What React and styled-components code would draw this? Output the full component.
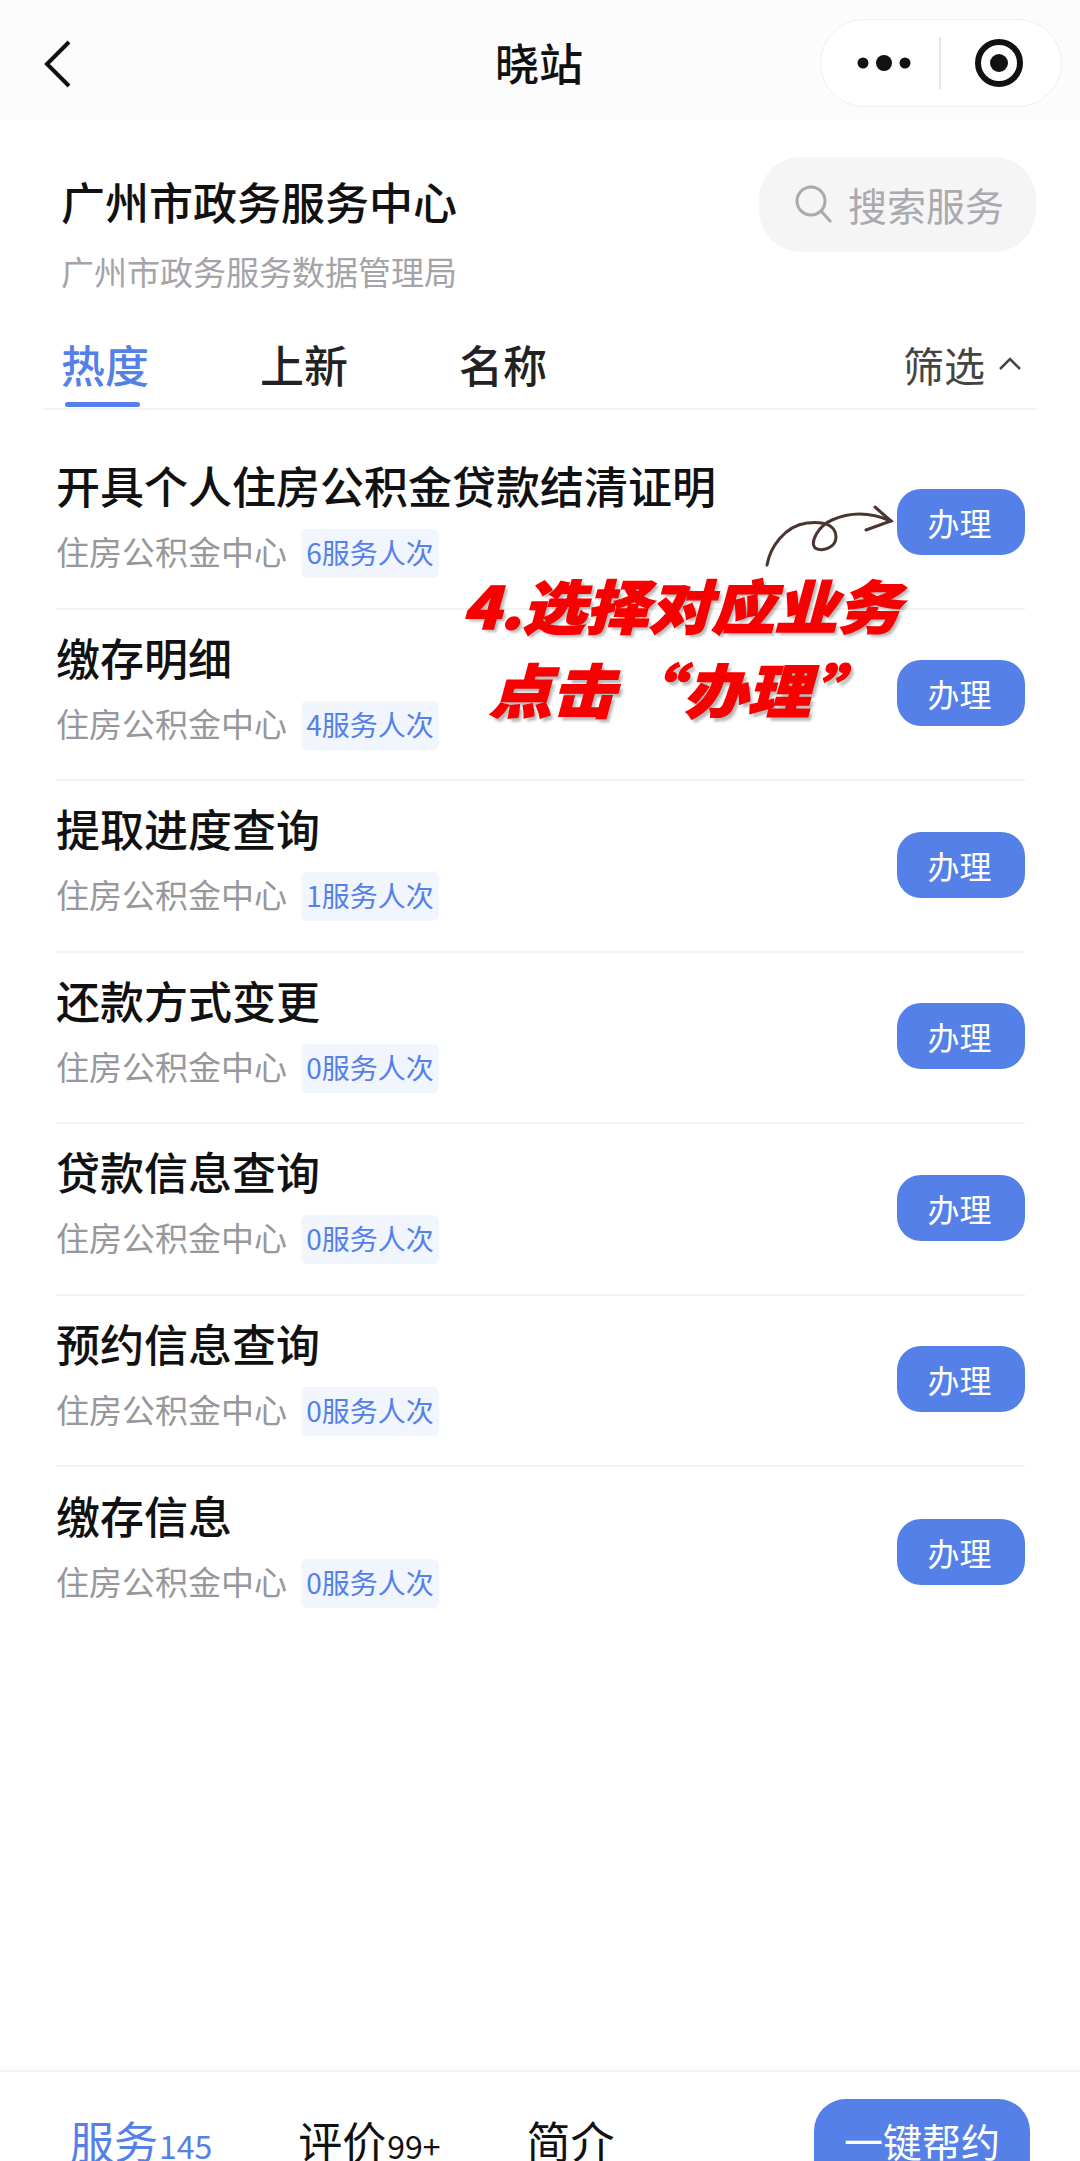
import React from "react";
import styled, { createGlobalStyle } from "styled-components";

const GlobalStyle = createGlobalStyle`
  html, body {
    margin: 0;
    padding: 0;
    background: #fff;
  }
  body {
    font-family: "Noto Sans CJK SC", "Noto Sans", sans-serif;
  }
`;

const Page = styled.div`
  position: relative;
  width: 1080px;
  height: 2161px;
  overflow: hidden;
  display: flex;
  flex-direction: column;
  background: #fff;
`;

const NavBar = styled.div`
  position: relative;
  flex: none;
  height: 120px;
  display: flex;
  align-items: center;
  justify-content: space-between;
  padding: 0 18px 0 44px;
  background: #fcfcfc;
`;

const BackIcon = styled.svg`
  margin-top: 7px;
`;

const NavTitle = styled.div`
  position: absolute;
  left: 0;
  right: 0;
  top: 32px;
  padding-right: 2px;
  text-align: center;
  font-size: 44px;
  line-height: 60px;
  font-weight: 500;
  color: #111;
`;

const Capsule = styled.div`
  width: 242px;
  height: 88px;
  margin-top: 6px;
  box-sizing: border-box;
  border: 1.5px solid #efefef;
  border-radius: 44px;
  background: #fff;
  display: flex;
  align-items: center;
  padding-left: 36px;
`;

const CapsuleRule = styled.div`
  width: 1.5px;
  height: 52px;
  margin: 0 34px 0 28px;
  background: #e6e6e6;
`;

const Header = styled.div`
  flex: none;
  display: flex;
  justify-content: space-between;
  align-items: flex-start;
  padding: 37px 44px 0 61px;
`;

const Heading = styled.div`
  padding-top: 14px;
`;

const Title = styled.div`
  font-size: 44px;
  line-height: 60px;
  font-weight: 500;
  color: #111;
`;

const Subtitle = styled.div`
  margin-top: 18px;
  font-size: 33px;
  line-height: 44px;
  color: #a4a4a8;
`;

const SearchBox = styled.div`
  width: 277px;
  height: 95px;
  box-sizing: border-box;
  padding: 0 0 2px 36px;
  border-radius: 42px;
  background: #f5f5f6;
  display: flex;
  align-items: center;
  gap: 15px;
  font-size: 39px;
  color: #a9a9ae;
`;

const TabBar = styled.div`
  flex: none;
  margin: 41px 44px 0;
  padding: 0 0 14px 17px;
  border-bottom: 2px solid #f1f1f2;
  display: flex;
  align-items: center;
  gap: 111px;
`;

const Tab = styled.div`
  position: relative;
  font-size: 44px;
  line-height: 60px;
  font-weight: 500;
  color: ${(p) => (p.$active ? "#5480e8" : "#222")};

  ${(p) =>
    p.$active &&
    `
    &::after {
      content: "";
      position: absolute;
      left: 4px;
      right: 9px;
      bottom: -13px;
      height: 5px;
      border-radius: 3px;
      background: #5480e8;
    }
  `}
`;

const Filter = styled.div`
  margin-left: auto;
  padding-right: 14px;
  display: flex;
  align-items: center;
  gap: 13px;
  font-size: 41px;
  line-height: 60px;
  color: #444;
`;

const List = styled.div`
  flex: 1;
  padding: 28px 55px 0 56px;
`;

const Row = styled.div`
  height: 171.5px;
  box-sizing: border-box;
  padding-bottom: 2px;
  display: flex;
  align-items: center;
  justify-content: space-between;
  border-bottom: ${(p) => (p.$last ? "none" : "2px solid #f2f2f3")};
`;

const RowText = styled.div`
  padding-bottom: 10px;
`;

const RowTitle = styled.div`
  font-size: 44px;
  line-height: 60px;
  font-weight: 500;
  color: #111;
`;

const RowMeta = styled.div`
  margin-top: 12px;
  display: flex;
  align-items: flex-start;
  gap: 14px;
`;

const Dept = styled.span`
  font-size: 33px;
  line-height: 49px;
  color: #97979c;
`;

const Tag = styled.span`
  width: 138px;
  height: 49px;
  margin-top: 2px;
  border-radius: 6px;
  background: #f1f5fe;
  color: #5480e8;
  font-size: 28px;
  line-height: 47px;
  text-align: center;
  white-space: nowrap;
`;

const HandleButton = styled.button`
  width: 128px;
  height: 66px;
  padding: 0 3px 0 0;
  border: none;
  border-radius: 24px;
  background: #5480e8;
  color: #fff;
  font-family: inherit;
  font-size: 32px;
`;

const BottomBar = styled.div`
  flex: none;
  height: 91px;
  box-sizing: border-box;
  display: flex;
  align-items: flex-start;
  padding: 27px 50px 0 70px;
  border-top: 2px solid #f3f3f3;
  box-shadow: 0 -3px 6px rgba(0, 0, 0, 0.02);
`;

const BottomTabs = styled.div`
  display: flex;
  gap: 86px;
  padding-top: 20px;
`;

const BottomTab = styled.div`
  display: flex;
  align-items: baseline;
  font-size: 44px;
  line-height: 42px;
  white-space: nowrap;
  color: ${(p) => (p.$active ? "#5480e8" : "#111")};
`;

const Count = styled.span`
  margin-left: 1px;
  font-size: 32px;
`;

const HelpButton = styled.button`
  flex: none;
  width: 216px;
  height: 96px;
  margin-left: auto;
  padding: 21px 0 0;
  border: none;
  border-radius: 32px;
  background: #5480e8;
  color: #fff;
  font-family: inherit;
  font-size: 39px;
  line-height: 40px;
  display: flex;
  justify-content: center;
  align-items: flex-start;
  box-sizing: border-box;
`;

/* the red annotation pasted over the screenshot */
const Callout = styled.div`
  position: absolute;
  left: 458px;
  top: 554px;
  width: 446px;
  transform: scaleY(0.92);
  text-align: center;
  font-size: 63px;
  line-height: 92px;
  font-weight: 900;
  font-style: italic;
  white-space: nowrap;
  color: #f90000;
  -webkit-text-stroke: 1.5px #f90000;
  text-shadow: 3px 4px 3px rgba(0, 0, 0, 0.28);
`;

const CalloutLine = styled.div`
  margin-left: ${(p) => p.$shift || 0}px;
`;

const Quote = styled.span`
  margin: 0 3px;
`;

const CalloutArrow = styled.svg`
  position: absolute;
  left: 760px;
  top: 500px;
`;

const services = [
  { name: "开具个人住房公积金贷款结清证明", count: 6 },
  { name: "缴存明细", count: 4 },
  { name: "提取进度查询", count: 1 },
  { name: "还款方式变更", count: 0 },
  { name: "贷款信息查询", count: 0 },
  { name: "预约信息查询", count: 0 },
  { name: "缴存信息", count: 0 },
];

const App = () => {
  return (
    <Page>
      <GlobalStyle />
      <NavBar>
        <BackIcon width="28" height="48" viewBox="0 0 28 48" fill="none">
          <path d="M25 2 L3 24 L25 46" stroke="#111" strokeWidth="4" />
        </BackIcon>
        <NavTitle>晓站</NavTitle>
        <Capsule>
          <svg width="54" height="20" viewBox="0 0 54 20" fill="#111">
            <circle cx="6" cy="10" r="5.5" />
            <circle cx="27" cy="10" r="8" />
            <circle cx="48" cy="10" r="5.5" />
          </svg>
          <CapsuleRule />
          <svg width="48" height="48" viewBox="0 0 48 48" fill="none">
            <circle cx="24" cy="24" r="21" stroke="#111" strokeWidth="6" />
            <circle cx="24" cy="24" r="9" fill="#111" />
          </svg>
        </Capsule>
      </NavBar>

      <Header>
        <Heading>
          <Title>广州市政务服务中心</Title>
          <Subtitle>广州市政务服务数据管理局</Subtitle>
        </Heading>
        <SearchBox>
          <svg width="38" height="38" viewBox="0 0 38 38" fill="none" stroke="#a9a9ae" strokeWidth="3">
            <circle cx="16" cy="16" r="14" />
            <path d="M26 26 L36 37" />
          </svg>
          搜索服务
        </SearchBox>
      </Header>

      <TabBar>
        <Tab $active>热度</Tab>
        <Tab>上新</Tab>
        <Tab>名称</Tab>
        <Filter>
          筛选
          <svg width="24" height="14" viewBox="0 0 24 14" fill="none">
            <path d="M2 12 L12 2 L22 12" stroke="#444" strokeWidth="2.5" />
          </svg>
        </Filter>
      </TabBar>

      <List>
        {services.map((item, i) => (
          <Row key={item.name} $last={i === services.length - 1}>
            <RowText>
              <RowTitle>{item.name}</RowTitle>
              <RowMeta>
                <Dept>住房公积金中心</Dept>
                <Tag>{item.count}服务人次</Tag>
              </RowMeta>
            </RowText>
            <HandleButton>办理</HandleButton>
          </Row>
        ))}
      </List>

      <BottomBar>
        <BottomTabs>
          <BottomTab $active>
            服务<Count>145</Count>
          </BottomTab>
          <BottomTab>
            评价<Count>99+</Count>
          </BottomTab>
          <BottomTab>简介</BottomTab>
        </BottomTabs>
        <HelpButton>一键帮约</HelpButton>
      </BottomBar>

      <CalloutArrow width="140" height="70" viewBox="0 0 140 70" fill="none" stroke="#4a3530" strokeWidth="3" strokeLinecap="round">
        <path d="M7 65 C10 48 24 26 47 23 C62 21 76 24 76 37 C76 48 62 52 55 48 C50 42 58 26 72 20 C90 12 110 12 131 21" />
        <path d="M115 7 L131 21 L106 30" />
      </CalloutArrow>
      <Callout>
        <CalloutLine>4.选择对应业务</CalloutLine>
        <CalloutLine $shift={6}>
          点击<Quote>“</Quote>办理<Quote>”</Quote>
        </CalloutLine>
      </Callout>
    </Page>
  );
};

export default App;
